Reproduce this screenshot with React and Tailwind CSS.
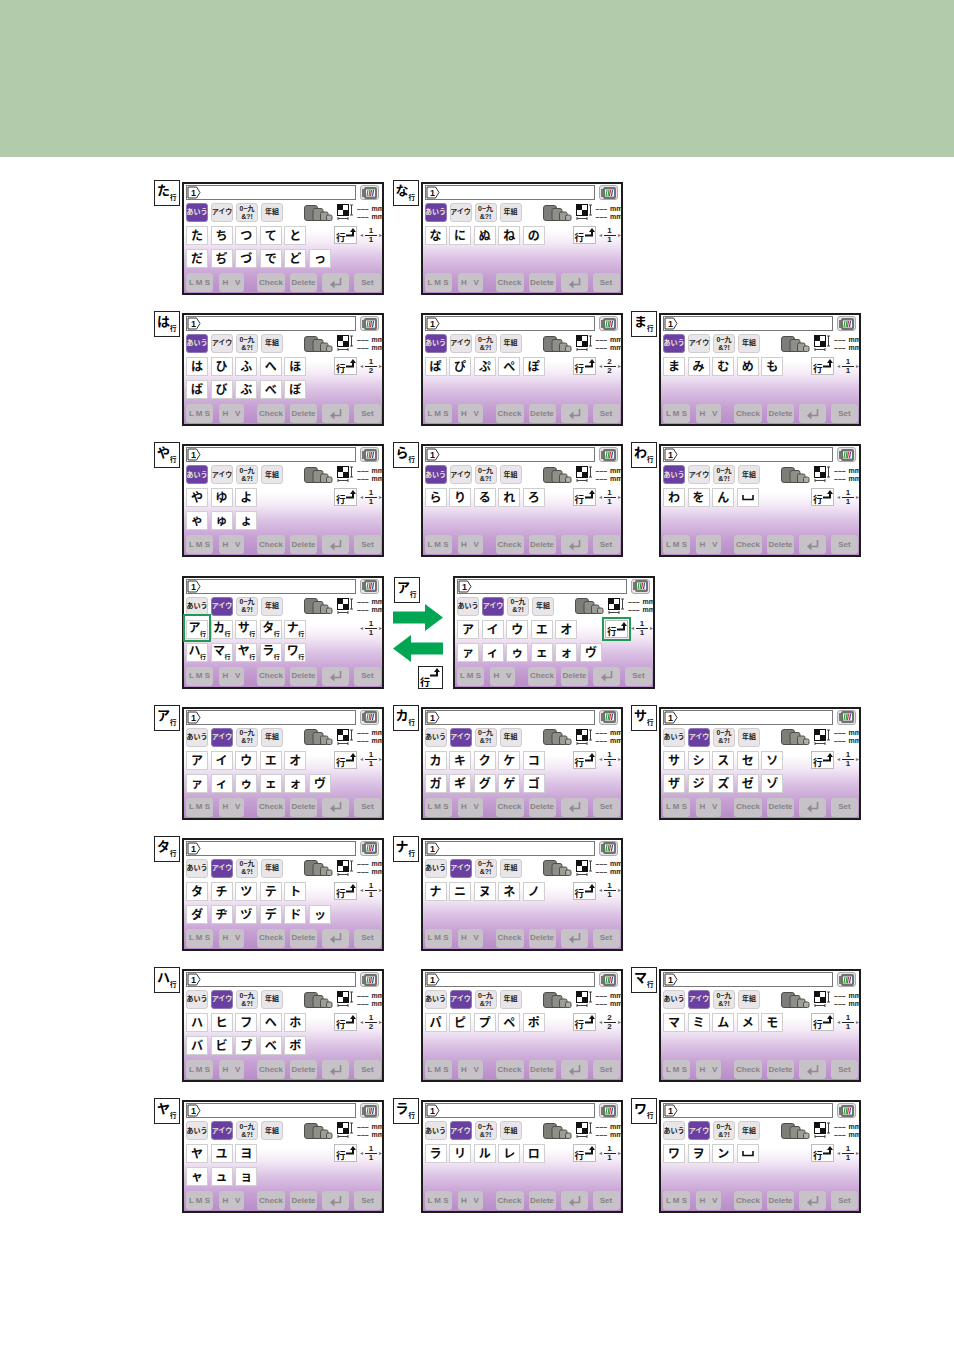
import React from "react";

const FONT = "font-['Liberation_Sans','Noto_Sans_CJK_JP',sans-serif]";

// Row label tile: a big kana with a small 行 next to it
const GyoTile = ({ kana, className = "" }) => (
  <div className={`flex h-[26px] w-[26px] items-start border-[1.5px] border-[#222] bg-white pl-[2px] ${className}`}>
    <span className="mt-[1px] text-[13px] font-bold leading-[17px] text-black">{kana}</span>
    <span className="mt-[12px] whitespace-nowrap text-[6.5px] font-bold leading-[9px] text-black">行</span>
  </div>
);

const GyoArrow = () => (
  <svg width="23" height="18" viewBox="0 0 23 18" className="absolute left-0 top-0">
    <path d="M11 8.5h7V4" fill="none" stroke="#111" strokeWidth="2" />
    <path d="M18 1l3 4h-6z" fill="#111" />
  </svg>
);

const HoopIcon = () => (
  <svg width="30" height="16" viewBox="0 0 30 16">
    <rect x="0.5" y="0.5" width="13" height="15" rx="2.5" fill="#7d7d79" stroke="#4f4f49" />
    <rect x="9" y="3.5" width="10" height="12" rx="2" fill="#8f8f8a" stroke="#4f4f49" />
    <rect x="16.5" y="7" width="7.5" height="8.5" rx="1.5" fill="#9d9d98" stroke="#4f4f49" />
    <rect x="22.5" y="10" width="5.5" height="5.5" rx="1.5" fill="#b0b0aa" stroke="#4f4f49" />
  </svg>
);

const SizeIcon = () => (
  <svg width="17" height="17" viewBox="0 0 17 17">
    <rect x="0.5" y="0.5" width="11" height="11" fill="#fff" stroke="#111" />
    <rect x="1" y="1" width="5" height="5" fill="#111" />
    <rect x="6" y="6" width="5" height="5" fill="#111" />
    <path d="M14.5 1v10M13 1h3M13 11h3M1 14.5h10M1 13v3M11 13v3" stroke="#444" fill="none" />
  </svg>
);

const MachineIcon = () => (
  <svg width="15" height="12" viewBox="0 0 15 12">
    <rect x="0" y="2" width="2" height="8" fill="#777" />
    <rect x="2" y="0" width="13" height="12" rx="2" fill="#6f726f" />
    <rect x="4" y="2.5" width="9" height="7" fill="#fff" />
    <path d="M5 9l1-6M7 9l1-6" stroke="#2a9a3a" strokeWidth="1.2" fill="none" />
    <path d="M8.5 9l1-6" stroke="#d8262c" strokeWidth="1.2" fill="none" />
    <path d="M10.5 9l1-6" stroke="#2a3ac0" strokeWidth="1.2" fill="none" />
  </svg>
);

const EnterIcon = () => (
  <svg width="13" height="12" viewBox="0 0 13 12">
    <path d="M11.5 1v6.5H3" fill="none" stroke="#8f8b90" strokeWidth="1.6" />
    <path d="M5.5 3.5L1 7.5l4.5 4z" fill="#8f8b90" />
  </svg>
);

// the blank key on the わ and ワ rows
const SpaceIcon = () => (
  <svg width="12" height="6" viewBox="0 0 12 6">
    <path d="M1 0v4.5h10V0" fill="none" stroke="#111" strokeWidth="1.6" />
  </svg>
);

const Tab = ({ active, wide, children }) => (
  <div
    className={`flex h-[19px] w-[22px] items-center justify-center whitespace-nowrap rounded-[3px] border text-center font-bold ${wide ? "text-[7px] leading-[8px]" : "text-[7px]"} ${
      active ? "border-[#8f78b8] bg-[#6a3fa2] text-[#ece6cf]" : "border-[#d0ccd0] bg-[#e8e6e8] text-[#222]"
    }`}
  >
    {children}
  </div>
);

const Key = ({ sub, children }) => (
  <div className="relative flex h-[19px] w-[22px] items-center justify-center border border-[#cfcfcf] bg-white pt-[1px] text-[12px] font-bold leading-none text-[#111]">
    {sub ? (
      <>
        <span className="-ml-[5px] -mt-[3px]">{children}</span>
        <span className="absolute bottom-[0px] right-[1px] text-[6px] leading-[7px]">行</span>
      </>
    ) : children === "␣" ? (
      <SpaceIcon />
    ) : (
      children
    )}
  </div>
);

const BottomBtn = ({ className, children }) => (
  <div className={`flex h-[19px] items-center justify-center whitespace-nowrap rounded-[3px] bg-[#c6c2c7] text-[8px] font-bold text-[#878288] ${className}`}>
    {children}
  </div>
);

const MmLine = () => (
  <div className="flex justify-between">
    <span>–––</span>
    <span>mm</span>
  </div>
);

// One panel of the embroidery name input screen
const Screen = ({ tab = 0, row1 = [], row2 = [], page = "1/1", sub, hiGyo }) => {
  const [cur, total] = page.split("/");
  return (
    <div className="flex h-[113px] w-[202px] shrink-0 flex-col border-2 border-[#1c1c1c] bg-[linear-gradient(to_bottom,#ffffff_0%,#ffffff_42%,#f4eaf6_54%,#dcc3e5_68%,#c59fd2_85%,#b88cc8_100%)] pl-[2px] pt-[1px]">
      <div className="flex h-[15px] gap-[4px]">
        <div className="flex w-[170px] items-center border border-[#777] bg-white">
          <svg width="15" height="13" viewBox="0 0 15 13">
            <path d="M1 1h8.5l3.5 5.5L9.5 12H1z" fill="#fff" stroke="#333" />
            <text x="4" y="10" fontSize="9" fontWeight="700" fill="#111" fontFamily="Liberation Sans">1</text>
          </svg>
        </div>
        <div className="flex w-[19px] items-center justify-center rounded-[3px] border border-[#aaa] bg-[#e6e6e6]">
          <MachineIcon />
        </div>
      </div>

      <div className="mt-[3px] flex h-[19px] items-center">
        <div className="flex gap-[3px]">
          <Tab active={tab === 0}>あいう</Tab>
          <Tab active={tab === 1}>アイウ</Tab>
          <Tab wide>
            <span>
              0~九
              <br />
              &amp;?!
            </span>
          </Tab>
          <Tab>年組</Tab>
        </div>
        <div className="ml-[21px] shrink-0">
          <HoopIcon />
        </div>
        <div className="ml-[3px] shrink-0">
          <SizeIcon />
        </div>
        <div className="ml-[3px] flex w-[27px] shrink-0 flex-col whitespace-nowrap text-[7px] font-bold leading-[8px] text-[#222]">
          <MmLine />
          <MmLine />
        </div>
      </div>

      <div className="mt-[4px] flex h-[46px] justify-between">
        <div className="flex flex-col gap-[4px]">
          <div className="flex gap-[2.6px]">
            {row1.map((k) => (
              <Key key={k} sub={sub}>{k}</Key>
            ))}
          </div>
          {row2.length > 0 && (
            <div className="flex gap-[2.6px]">
              {row2.map((k) => (
                <Key key={k} sub={sub}>{k}</Key>
              ))}
            </div>
          )}
        </div>
        <div className="flex h-[18px] gap-[3px]">
          {!sub && (
            <div className={`relative h-[18px] w-[23px] border border-[#bcbcbc] bg-white ${hiGyo ? "outline-2 outline-offset-1 outline-[#1f9b54]" : ""}`}>
              <GyoArrow />
              <span className="absolute bottom-[0px] left-[1px] text-[9.5px] font-bold leading-[10px] text-[#111]">行</span>
            </div>
          )}
          <div className="flex w-[22px] items-center justify-between text-[#777]">
            <span className="text-[6px]">◂</span>
            <div className="flex flex-col items-center text-[8px] font-bold leading-[8px] text-[#222]">
              <span className="w-[12px] border-b border-[#222] text-center">{cur}</span>
              <span>{total}</span>
            </div>
            <span className="text-[6px]">▸</span>
          </div>
        </div>
      </div>

      <div className="mt-[1px] flex">
        <BottomBtn className="w-[27px]">L M S</BottomBtn>
        <BottomBtn className="ml-[6px] w-[25px]">H&nbsp;&nbsp;&nbsp;V</BottomBtn>
        <BottomBtn className="ml-[13px] w-[28px]">Check</BottomBtn>
        <BottomBtn className="ml-[5px] w-[27px]">Delete</BottomBtn>
        <BottomBtn className="ml-[5px] w-[27px]">
          <EnterIcon />
        </BottomBtn>
        <BottomBtn className="ml-[5px] w-[27px]">Set</BottomBtn>
      </div>
    </div>
  );
};

const Cell = ({ label, ...props }) => (
  <div className="flex w-[238.5px] items-start gap-[2px]">
    <div className="w-[25px] shrink-0">{label && <GyoTile kana={label} className="-ml-[1px] -mt-[2px]" />}</div>
    <Screen {...props} />
  </div>
);

const GreenArrow = ({ flip }) => (
  <svg width="50" height="27" viewBox="0 0 50 27" className={flip ? "-scale-x-100" : ""}>
    <path d="M0 7.5h32V0l18 13.5L32 27v-7.5H0z" fill="#00a651" />
  </svg>
);

const rows = [
  [
    { label: "た", row1: ["た", "ち", "つ", "て", "と"], row2: ["だ", "ぢ", "づ", "で", "ど", "っ"] },
    { label: "な", row1: ["な", "に", "ぬ", "ね", "の"] },
  ],
  [
    { label: "は", row1: ["は", "ひ", "ふ", "へ", "ほ"], row2: ["ば", "び", "ぶ", "べ", "ぼ"], page: "1/2" },
    { row1: ["ぱ", "ぴ", "ぷ", "ぺ", "ぽ"], page: "2/2" },
    { label: "ま", row1: ["ま", "み", "む", "め", "も"] },
  ],
  [
    { label: "や", row1: ["や", "ゆ", "よ"], row2: ["ゃ", "ゅ", "ょ"] },
    { label: "ら", row1: ["ら", "り", "る", "れ", "ろ"] },
    { label: "わ", row1: ["わ", "を", "ん", "␣"] },
  ],
  "switch",
  [
    { label: "ア", tab: 1, row1: ["ア", "イ", "ウ", "エ", "オ"], row2: ["ァ", "ィ", "ゥ", "ェ", "ォ", "ヴ"] },
    { label: "カ", tab: 1, row1: ["カ", "キ", "ク", "ケ", "コ"], row2: ["ガ", "ギ", "グ", "ゲ", "ゴ"] },
    { label: "サ", tab: 1, row1: ["サ", "シ", "ス", "セ", "ソ"], row2: ["ザ", "ジ", "ズ", "ゼ", "ゾ"] },
  ],
  [
    { label: "タ", tab: 1, row1: ["タ", "チ", "ツ", "テ", "ト"], row2: ["ダ", "ヂ", "ヅ", "デ", "ド", "ッ"] },
    { label: "ナ", tab: 1, row1: ["ナ", "ニ", "ヌ", "ネ", "ノ"] },
  ],
  [
    { label: "ハ", tab: 1, row1: ["ハ", "ヒ", "フ", "ヘ", "ホ"], row2: ["バ", "ビ", "ブ", "ベ", "ボ"], page: "1/2" },
    { tab: 1, row1: ["パ", "ピ", "プ", "ペ", "ポ"], page: "2/2" },
    { label: "マ", tab: 1, row1: ["マ", "ミ", "ム", "メ", "モ"] },
  ],
  [
    { label: "ヤ", tab: 1, row1: ["ヤ", "ユ", "ヨ"], row2: ["ャ", "ュ", "ョ"] },
    { label: "ラ", tab: 1, row1: ["ラ", "リ", "ル", "レ", "ロ"] },
    { label: "ワ", tab: 1, row1: ["ワ", "ヲ", "ン", "␣"] },
  ],
];

const SwitchRow = () => (
  <div className="flex items-start pl-[27px]">
    <div className="relative">
      <Screen
        tab={1}
        sub
        row1={["ア", "カ", "サ", "タ", "ナ"]}
        row2={["ハ", "マ", "ヤ", "ラ", "ワ"]}
      />
      <div className="absolute left-[1px] top-[38px] h-[28px] w-[28px] border-2 border-[#1f9b54]" />
    </div>
    <div className="ml-[9px] flex h-[113px] w-[50px] shrink-0 flex-col">
      <GyoTile kana="ア" className="ml-[1px] mt-[1px]" />
      <div className="mt-[1px]">
        <GreenArrow />
      </div>
      <div className="mt-[4px]">
        <GreenArrow flip />
      </div>
      <div className="relative ml-[25px] mt-[4px] h-[23px] w-[25px] border-[1.5px] border-[#222] bg-white">
        <GyoArrow />
        <span className="absolute bottom-[0px] left-[1px] text-[10px] font-bold leading-[11px]">行</span>
      </div>
    </div>
    <div className="ml-[10px]">
      <Screen
        tab={1}
        hiGyo
        row1={["ア", "イ", "ウ", "エ", "オ"]}
        row2={["ァ", "ィ", "ゥ", "ェ", "ォ", "ヴ"]}
      />
    </div>
  </div>
);

export default function App() {
  return (
    <div className={`min-h-[1350px] w-[954px] bg-white ${FONT}`}>
      <div className="h-[157px] bg-[#b2ccab]" />
      <div className="flex flex-col gap-y-[18.2px] pl-[155px] pt-[25px]">
        {rows.map((row, i) =>
          row === "switch" ? (
            <SwitchRow key={i} />
          ) : (
            <div key={i} className="flex">
              {row.map((cell, j) => (
                <Cell key={j} {...cell} />
              ))}
            </div>
          )
        )}
      </div>
    </div>
  );
}
